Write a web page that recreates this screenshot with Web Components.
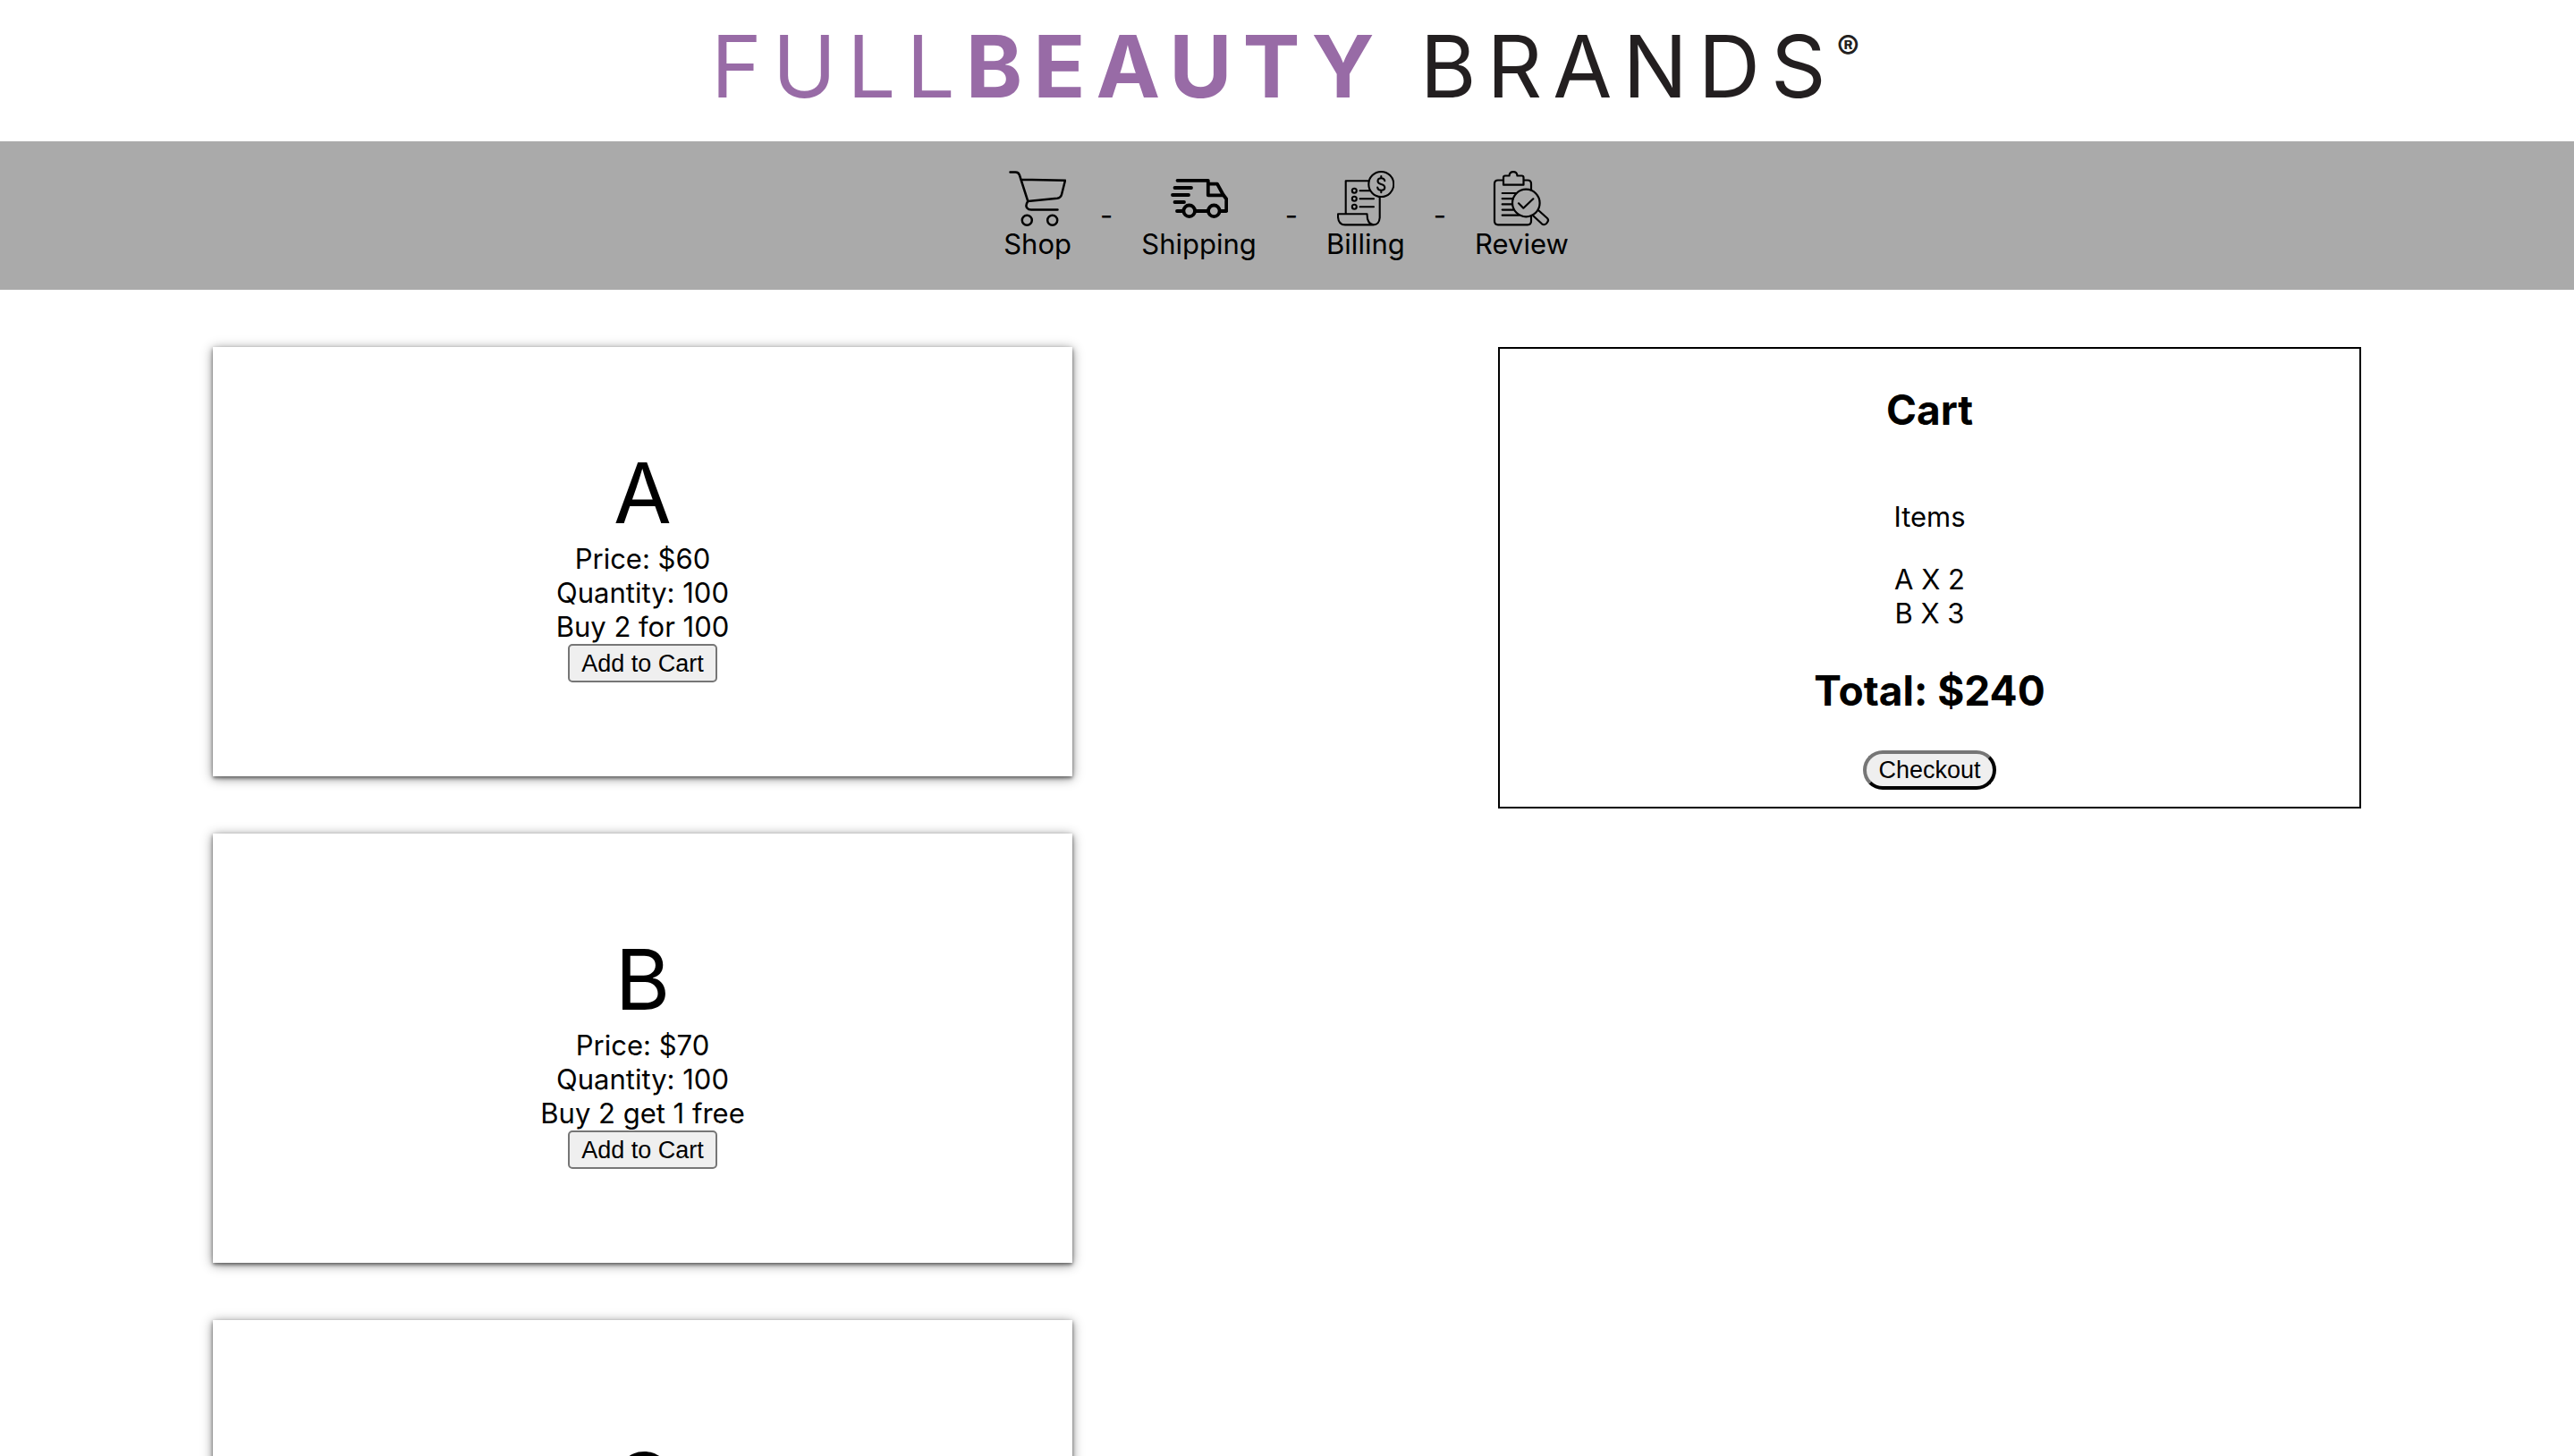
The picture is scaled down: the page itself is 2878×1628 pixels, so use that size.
<!DOCTYPE html>
<html lang="en">
<head>
<meta charset="utf-8">
<title>FullBeauty Brands</title>
<style>
  body { margin: 0; background: #fff; color: #000; font: 31px/38px Inter, "Liberation Sans", sans-serif; overflow-x: hidden; }
</style>
</head>
<body>
<store-app></store-app>

<script>
class StoreElement extends HTMLElement {
  connectedCallback() {
    if (!this.shadowRoot) this.attachShadow({ mode: "open" }).innerHTML = this.render();
  }
}

/* Wordmark at the top of the page */
customElements.define("brand-logo", class extends StoreElement {
  render() {
    return `<style>
      :host { display: flex; justify-content: center; height: 158px; box-sizing: border-box; padding: 16px 4px 0 0; }
      h1 { margin: 0; font-size: 96px; line-height: 116px; font-weight: 400; letter-spacing: 12px; white-space: nowrap; color: #231f20; }
      .full { color: #986ba6; }
      b { font-weight: 700; }
      sup { font-size: 38px; line-height: 38px; font-weight: 700; letter-spacing: normal; vertical-align: 42px; }
    </style>
    <h1><span class="full">FULL<b>BEAUTY</b></span> BRANDS<sup>®</sup></h1>`;
  }
});

const icons = {
  shop: `<g stroke-width="2.5"><path d="M1.5 2.5H7.5Q11 2.5 12 6L21.3 35M13.3 10.7L63 11.7L59 27.5Q58 31.3 54 31.8L21.3 35Q18 40 20.5 42.7Q22 44.6 25 44.6H54.5"/><circle cx="20.3" cy="56.3" r="5.5"/><circle cx="48.7" cy="56.3" r="5.5"/></g>`,
  shipping: `<g stroke-width="3.8"><path d="M7.5 11.8H41.8V28.3H59M4.5 20H23M2 28H20M4.5 36H15M7 46H14M27 46H42M41.8 15.7H52L58.5 27.5L62.2 32.5V46H55"/><circle cx="20.7" cy="45.8" r="6.3"/><circle cx="48.3" cy="45.8" r="6.3"/></g>`,
  billing: `<g stroke-width="2.1"><path d="M9.7 49V12.3H35.5M47.7 30.7V53.5Q47 61.4 40.5 61.4Q33.5 60.5 33.5 49.3H1V52.5Q1.5 61.4 9 61.4H40.5M25.5 23.3H37M25.5 32.3H41M25.5 41.3H41"/><circle cx="19.3" cy="23.3" r="2.5"/><circle cx="19.3" cy="32.3" r="2.5"/><circle cx="19.3" cy="41.3" r="2.5"/><circle cx="49.3" cy="16" r="14"/><path d="M53.3 12.2Q52.8 9.2 49.3 9.2Q45.5 9.2 45.5 12.4Q45.5 15 49.3 15.9Q53.3 16.8 53.3 19.8Q53.3 22.8 49.3 22.8Q45.6 22.8 45.2 19.6M49.3 7V9M49.3 23V25.2"/></g>`,
  review: `<g stroke-width="2.2"><path d="M12 11.5H6Q2 11.5 2 15.5V57.3Q2 61.3 6 61.3H39Q43 61.3 43 57.3V51.5M34.5 11.5H39Q43 11.5 43 15.5V22.5M14 6.5H18.5Q19 2.2 23 2.2Q27 2.2 27.5 6.5H32.5Q34.5 6.5 34.5 8.5V16.7H12V8.5Q12 6.5 14 6.5ZM10.7 26H26M10.7 32.2H23M10.7 38.4H21.5M10.7 44.6H23M10.7 50.7H29"/><circle cx="37.3" cy="37" r="15.3"/><path d="M29 37.3L34.3 42.7L45.3 32.3M45.5 51.5L55 60.3Q57.5 62.2 60 60Q63.5 56.7 61 54L51 45"/></g>`
};

/* One checkout step: icon with its name below */
customElements.define("checkout-step", class extends StoreElement {
  render() {
    return `<style>
      :host { display: flex; flex-direction: column; align-items: center; }
      svg { width: 64px; height: 64px; fill: none; stroke: #000; stroke-linecap: round; stroke-linejoin: round; }
    </style>
    <svg viewBox="0 0 64 64" aria-hidden="true">${icons[this.getAttribute("icon")]}</svg>
    <slot></slot>`;
  }
});

customElements.define("checkout-steps", class extends StoreElement {
  render() {
    return `<style>
      :host { display: block; background: #aaa; padding: 32px 2px 32px 0; }
      nav { display: flex; justify-content: center; align-items: center; gap: 32px; }
    </style>
    <nav aria-label="Checkout steps">
      <checkout-step icon="shop">Shop</checkout-step>
      <span>-</span>
      <checkout-step icon="shipping">Shipping</checkout-step>
      <span>-</span>
      <checkout-step icon="billing">Billing</checkout-step>
      <span>-</span>
      <checkout-step icon="review">Review</checkout-step>
    </nav>`;
  }
});

/* A product tile; price, stock and offer appear once a price is set */
customElements.define("product-card", class extends StoreElement {
  render() {
    const details = this.hasAttribute("price") ? `
      <div>Price: ${this.getAttribute("price")}</div>
      <div>Quantity: ${this.getAttribute("quantity")}</div>
      <div><slot name="offer"></slot></div>
      <button type="button">Add to Cart</button>` : "";
    return `<style>
      :host { display: flex; flex-direction: column; align-items: center; height: 480px; box-sizing: border-box; padding-top: 109px; background: #fff;
        box-shadow: 0 2px 4px rgba(0,0,0,.5), 0 2px 12px rgba(0,0,0,.45); }
      :host(:not([price])) { padding-top: 128px; }
      .name { font-size: 94px; line-height: 109px; }
      button { height: 43px; padding: 0 13px; border: 2px solid #767676; border-radius: 5px; background: #efefef; color: #000;
        font: 27px/32px "Liberation Sans", sans-serif; }
    </style>
    <div class="name"><slot></slot></div>${details}`;
  }
});

customElements.define("cart-summary", class extends StoreElement {
  render() {
    return `<style>
      :host { display: block; border: 2px solid #000; text-align: center; padding-bottom: 19px; }
      h2 { margin: 40px 0; font-size: 46px; line-height: 57px; font-weight: 700; }
      .total { margin: 39px 0 38px; }
      .items { display: flow-root; }
      p { margin: 32px 0; }
      button { height: 44px; padding: 0 13px; border: 4px outset #767676; border-color: #767676 #212121 #212121 #767676; border-radius: 22px;
        background: #efefef; color: #000; font: 27px/32px "Liberation Sans", sans-serif; display: block; margin: 0 auto; }
    </style>
    <h2>Cart</h2>
    <div class="items">
      <p>Items</p>
      <slot></slot>
    </div>
    <h2 class="total">Total: <slot name="total"></slot></h2>
    <button type="button">Checkout</button>`;
  }
});

customElements.define("store-app", class extends StoreElement {
  render() {
    return `<style>
      :host { display: block; }
      main { display: flex; justify-content: space-around; align-items: flex-start; padding: 64px 0; }
      .products { width: 33.4%; display: flex; flex-direction: column; gap: 64px; }
      cart-summary { width: 33.4%; }
    </style>
    <brand-logo></brand-logo>
    <checkout-steps></checkout-steps>
    <main>
      <section class="products">
        <product-card price="$60" quantity="100">A<span slot="offer">Buy 2 for 100</span></product-card>
        <product-card price="$70" quantity="100">B<span slot="offer">Buy 2 get 1 free</span></product-card>
        <product-card>C</product-card>
      </section>
      <cart-summary><div>A X 2</div><div>B X 3</div><span slot="total">$240</span></cart-summary>
    </main>`;
  }
});
</script>
</body>
</html>
